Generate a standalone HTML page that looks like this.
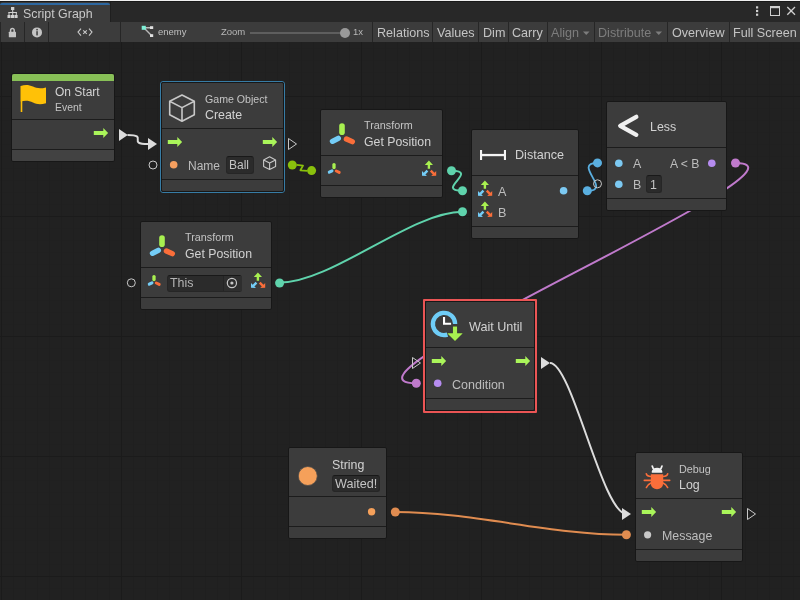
<!DOCTYPE html>
<html><head><meta charset="utf-8">
<style>
html,body{margin:0;padding:0;}
body{width:800px;height:600px;overflow:hidden;position:relative;background:#212121;font-family:"Liberation Sans",sans-serif;}
.a{position:absolute;}
.t{position:absolute;white-space:nowrap;line-height:1;will-change:transform;}
#grid{position:absolute;left:0;top:42px;width:800px;height:558px;background-color:#212121;
background-image:
linear-gradient(to right,#1b1b1b 1px,transparent 1px),
linear-gradient(to bottom,#1b1b1b 1px,transparent 1px),
linear-gradient(to right,#1f1f1f 1px,transparent 1px),
linear-gradient(to bottom,#202020 1px,transparent 1px);
background-size:120px 120px,120px 120px,12px 12px,12px 12px;
background-position:1px 54px,1px 54px,1px 6px,1px 6px;}
.n{position:absolute;box-sizing:border-box;border:1px solid #171717;border-radius:2px;background:#3c3c3c;}
.s{position:absolute;height:1px;background:#1c1c1c;}
.tb{position:absolute;top:22px;height:20px;width:1px;background:#262626;}
.bt{position:absolute;top:24px;font-size:12.6px;color:#c4c4c4;line-height:18px;white-space:nowrap;will-change:transform;}
.dis{color:#7d7d7d;}
svg{position:absolute;left:0;top:0;overflow:visible;}
</style></head>
<body>
<!-- top chrome -->
<div class="a" style="left:0;top:0;width:800px;height:1px;background:#f0f0f0"></div>
<div class="a" style="left:0;top:1px;width:800px;height:1px;background:#191919"></div>
<div class="a" style="left:0;top:2px;width:800px;height:20px;background:#282828"></div>
<div class="a" style="left:0;top:2px;width:110px;height:20px;background:#3c3c3c;border-radius:3px 3px 0 0"></div>
<div class="a" style="left:0;top:3px;width:110px;height:2px;background:#2d67a0;border-radius:2px 2px 0 0"></div>
<div class="a" style="left:110px;top:2px;width:1px;height:20px;background:#1f1f1f"></div>
<!-- toolbar -->
<div class="a" style="left:0;top:22px;width:800px;height:20px;background:#3c3c3c"></div>
<div class="tb" style="left:0"></div>
<div class="tb" style="left:24px"></div>
<div class="tb" style="left:48px"></div>
<div class="tb" style="left:120px"></div>
<div class="tb" style="left:372px"></div>
<div class="tb" style="left:432px"></div>
<div class="tb" style="left:478px"></div>
<div class="tb" style="left:508px"></div>
<div class="tb" style="left:547px"></div>
<div class="tb" style="left:594px"></div>
<div class="tb" style="left:667px"></div>
<div class="tb" style="left:729px"></div>
<div class="t" style="left:221px;top:27px;font-size:9.5px;color:#b8b8b8">Zoom</div>
<div class="t" style="left:158px;top:27px;font-size:9.5px;color:#c0c0c0">enemy</div>
<div class="t" style="left:353px;top:27px;font-size:9.5px;color:#b8b8b8">1x</div>
<div class="a" style="left:250px;top:32px;width:95px;height:2px;background:#5e5e5e"></div>
<div class="a" style="left:340px;top:28px;width:10px;height:10px;border-radius:50%;background:#999"></div>
<div class="bt" style="left:377px">Relations</div>
<div class="bt" style="left:437px">Values</div>
<div class="bt" style="left:483px">Dim</div>
<div class="bt" style="left:512px">Carry</div>
<div class="bt dis" style="left:551px">Align</div>
<div class="bt dis" style="left:598px">Distribute</div>
<div class="bt" style="left:672px">Overview</div>
<div class="bt" style="left:733px">Full Screen</div>
<!-- graph -->
<div id="grid"></div>

<!-- edges (under nodes) -->
<svg width="800" height="600" style="fill:none">
<path d="M127.5,135 C149.5,135 126,144 148,144" stroke="#dcdcdc" stroke-width="2"/>
<path d="M296.6,164.9 L303,165.6 L300.4,170.3 L307.4,170.9" stroke="#8ac10c" stroke-width="1.8" stroke-linejoin="round"/>
<path d="M451.5,170.8 C479.5,170.8 434.5,190.8 462.5,190.8" stroke="#5fd3ac" stroke-width="2"/>
<path d="M280.5,282.5 C331.5,282.5 411.5,211.8 462.5,211.8" stroke="#5fd3ac" stroke-width="2"/>
<path d="M587.3,190.8 C613.3,190.8 571.5,162.9 597.5,162.9" stroke="#5aafe0" stroke-width="1.8"/>
<path d="M735.5,163 C835.5,163 310.3,383.2 416.3,383.2" stroke="#c07acc" stroke-width="2"/>
<path d="M550,363 C572,363 602.5,514 626.5,514" stroke="#dcdcdc" stroke-width="2"/>
<path d="M395.5,512 C472.5,512 549.3,534.8 626.3,534.8" stroke="#e08c50" stroke-width="2"/>
<g fill="#dcdcdc">
<polygon points="119,129 127.8,135 119,141"/>
<polygon points="148,138 157,144 148,150"/>
<polygon points="541,357 550,363 541,369"/>
<polygon points="622,508 631,514 622,520"/>
</g>
<g fill="none" stroke="#c8c8c8" stroke-width="1">
<polygon points="288.5,138.5 296.5,144 288.5,149.5"/>
<polygon points="412.5,357.5 420.5,363 412.5,368.5"/>
<polygon points="747.5,508.5 755.5,514 747.5,519.5"/>
<circle cx="153" cy="165" r="4"/>
<circle cx="597.5" cy="183.8" r="4"/>
<circle cx="131.3" cy="282.8" r="4"/>
</g>
<g>
<circle cx="292.3" cy="165" r="4.5" fill="#8ac10c"/>
<circle cx="311.6" cy="170.6" r="4.5" fill="#8ac10c"/>
<circle cx="451.5" cy="170.8" r="4.5" fill="#5fd3ac"/>
<circle cx="462.5" cy="190.8" r="4.5" fill="#5fd3ac"/>
<circle cx="462.5" cy="211.8" r="4.5" fill="#5fd3ac"/>
<circle cx="279.6" cy="283" r="4.5" fill="#5fd3ac"/>
<circle cx="587.3" cy="190.8" r="4.5" fill="#5aafe0"/>
<circle cx="597.5" cy="162.9" r="4.5" fill="#5aafe0"/>
<circle cx="735.5" cy="163" r="4.5" fill="#c07acc"/>
<circle cx="416.3" cy="383.2" r="4.5" fill="#c07acc"/>
<circle cx="395.3" cy="512" r="4.5" fill="#e08c50"/>
<circle cx="626.4" cy="534.8" r="4.5" fill="#e08c50"/>
</g>
</svg>
<!-- nodes -->
<div class="n" style="left:11px;top:73px;width:104px;height:89px"></div>
<div class="a" style="left:12px;top:74px;width:102px;height:7px;background:#88c057;border-radius:2px 2px 0 0"></div>
<div class="s" style="left:12px;top:119px;width:102px"></div>
<div class="s" style="left:12px;top:149px;width:102px"></div>
<div class="a" style="left:12px;top:150px;width:102px;height:11px;background:#424242;border-radius:0 0 2px 2px"></div>

<div class="a" style="left:160px;top:81px;width:125px;height:112px;box-sizing:border-box;border:1px solid #377ca5;border-radius:3px"></div>
<div class="n" style="left:161px;top:82px;width:123px;height:110px"></div>
<div class="s" style="left:162px;top:128px;width:121px"></div>
<div class="s" style="left:162px;top:179px;width:121px"></div>

<div class="n" style="left:320px;top:109px;width:123px;height:89px"></div>
<div class="s" style="left:321px;top:155px;width:121px"></div>
<div class="s" style="left:321px;top:185px;width:121px"></div>

<div class="n" style="left:471px;top:129px;width:108px;height:110px"></div>
<div class="s" style="left:472px;top:175px;width:106px"></div>
<div class="s" style="left:472px;top:226px;width:106px"></div>

<div class="n" style="left:606px;top:101px;width:121px;height:110px"></div>
<div class="s" style="left:607px;top:147px;width:119px"></div>
<div class="s" style="left:607px;top:198px;width:119px"></div>

<div class="n" style="left:140px;top:221px;width:132px;height:89px"></div>
<div class="s" style="left:141px;top:267px;width:130px"></div>
<div class="s" style="left:141px;top:297px;width:130px"></div>

<div class="a" style="left:423px;top:299px;width:114px;height:114px;box-sizing:border-box;border:2px solid #eb5555;border-radius:1px"></div>
<div class="n" style="left:425px;top:301px;width:110px;height:110px"></div>
<div class="s" style="left:426px;top:347px;width:108px"></div>
<div class="s" style="left:426px;top:398px;width:108px"></div>

<div class="n" style="left:288px;top:447px;width:99px;height:92px"></div>
<div class="s" style="left:289px;top:496px;width:97px"></div>
<div class="s" style="left:289px;top:526px;width:97px"></div>

<div class="n" style="left:635px;top:452px;width:108px;height:110px"></div>
<div class="s" style="left:636px;top:498px;width:106px"></div>
<div class="s" style="left:636px;top:549px;width:106px"></div>

<!-- texts -->
<div class="t" style="left:55px;top:85.5px;font-size:12px;color:#d2d2d2">On Start</div>
<div class="t" style="left:55px;top:102.5px;font-size:10.4px;color:#c4c4c4">Event</div>
<div class="t" style="left:205px;top:93.5px;font-size:10.6px;color:#c4c4c4">Game Object</div>
<div class="t" style="left:205px;top:108.5px;font-size:12.4px;color:#d2d2d2">Create</div>
<div class="t" style="left:188px;top:159.5px;font-size:12px;color:#bdbdbd">Name</div>
<div class="a" style="left:226px;top:156px;width:28px;height:18px;background:#2b2b2b;border-radius:3px;box-sizing:border-box;border:1px solid #262626;border-top-color:#191919"></div>
<div class="t" style="left:229px;top:158.5px;font-size:12px;color:#c4c4c4">Ball</div>
<div class="t" style="left:364px;top:120px;font-size:10.8px;color:#c4c4c4">Transform</div>
<div class="t" style="left:364px;top:135.8px;font-size:12.3px;color:#d2d2d2">Get Position</div>
<div class="t" style="left:515px;top:149px;font-size:12.6px;color:#d2d2d2">Distance</div>
<div class="t" style="left:498px;top:185.8px;font-size:12.6px;color:#bdbdbd">A</div>
<div class="t" style="left:498px;top:206.8px;font-size:12.6px;color:#bdbdbd">B</div>
<div class="t" style="left:650px;top:120.5px;font-size:12.4px;color:#d2d2d2">Less</div>
<div class="t" style="left:633px;top:158px;font-size:12.4px;color:#bdbdbd">A</div>
<div class="t" style="left:669.5px;top:158px;font-size:12.2px;color:#bdbdbd">A &lt; B</div>
<div class="t" style="left:633px;top:178.8px;font-size:12.4px;color:#bdbdbd">B</div>
<div class="a" style="left:646px;top:175px;width:15.5px;height:17.5px;background:#2b2b2b;border-radius:3px;box-sizing:border-box;border:1px solid #262626;border-top-color:#191919"></div>
<div class="t" style="left:649.5px;top:179px;font-size:12.4px;color:#c4c4c4">1</div>
<div class="t" style="left:184.5px;top:232px;font-size:10.8px;color:#c4c4c4">Transform</div>
<div class="t" style="left:184.5px;top:247.8px;font-size:12.3px;color:#d2d2d2">Get Position</div>
<div class="a" style="left:167px;top:274.5px;width:75px;height:17px;background:#2b2b2b;border-radius:3px;box-sizing:border-box;border:1px solid #262626;border-top-color:#191919"></div>
<div class="a" style="left:223px;top:275.5px;width:18px;height:15px;background:#2e2e2e;border-left:1px solid #242424"></div>
<div class="t" style="left:170px;top:276.5px;font-size:12.4px;color:#b4b4b4">This</div>
<div class="t" style="left:469px;top:320.5px;font-size:12.6px;color:#d2d2d2">Wait Until</div>
<div class="t" style="left:452px;top:379px;font-size:12.5px;color:#bdbdbd">Condition</div>
<div class="t" style="left:332px;top:458.5px;font-size:12.4px;color:#d2d2d2">String</div>
<div class="a" style="left:332px;top:474.5px;width:48px;height:17px;background:#2b2b2b;border-radius:3px;box-sizing:border-box;border:1px solid #262626;border-top-color:#191919"></div>
<div class="t" style="left:334.5px;top:477.5px;font-size:12.6px;color:#c4c4c4">Waited!</div>
<div class="t" style="left:679px;top:463.5px;font-size:10.8px;color:#c4c4c4">Debug</div>
<div class="t" style="left:679px;top:478.5px;font-size:12.4px;color:#d2d2d2">Log</div>
<div class="t" style="left:662px;top:530px;font-size:12.4px;color:#bdbdbd">Message</div>
<div class="t" style="left:22.5px;top:7.5px;font-size:12.4px;color:#c8c8c8">Script Graph</div>
<!-- overlay icons -->
<svg width="800" height="600">
<defs>
<g id="arr"><path d="M0,-2H9.5V-5L14.3,0L9.5,5V2H0Z"/></g>
</defs>
<g fill="#aaf55a">
<use href="#arr" x="93.8" y="133"/>
<use href="#arr" x="167.8" y="142"/>
<use href="#arr" x="262.8" y="142"/>
<use href="#arr" x="431.8" y="361"/>
<use href="#arr" x="515.8" y="361"/>
<use href="#arr" x="641.8" y="512"/>
<use href="#arr" x="721.8" y="512"/>
</g>
<circle cx="173.7" cy="164.8" r="3.8" fill="#f59f5f"/>
<circle cx="563.6" cy="190.7" r="3.8" fill="#7cc9f2"/>
<circle cx="618.8" cy="163.2" r="3.8" fill="#7cc9f2"/>
<circle cx="618.8" cy="184.2" r="3.8" fill="#7cc9f2"/>
<circle cx="711.8" cy="163.2" r="3.8" fill="#b68cf0"/>
<circle cx="437.7" cy="383.2" r="3.8" fill="#b68cf0"/>
<circle cx="371.6" cy="511.7" r="3.7" fill="#f5a05a"/>
<circle cx="647.6" cy="534.8" r="3.6" fill="#c8c8c8"/>
</svg>

<!-- node icons -->
<svg width="800" height="600">
<defs>
<g id="v3">
<path d="M484.9,180.6 L489,184.9 L486.1,184.9 L486.1,188.8 L483.7,188.8 L483.7,184.9 L480.8,184.9 Z" fill="#a8f050"/>
<path d="M478,195.9 L478,191.2 L479.7,192.9 L482.6,190 L484.3,191.7 L481.4,194.6 L483,196.2 Z" fill="#74cdf7" transform="translate(0,-0.2)"/>
<path d="M492.2,195.9 L492.2,191.2 L490.5,192.9 L487.6,190 L485.9,191.7 L488.8,194.6 L487.2,196.2 Z" fill="#fa6e3a" transform="translate(0,-0.2)"/>
</g>
<g id="tri">
<line x1="342" y1="126" x2="342" y2="132.3" stroke="#a8f050" stroke-width="5.6" stroke-linecap="round"/>
<line x1="332.5" y1="141.3" x2="338.3" y2="138.3" stroke="#74cdf7" stroke-width="5.4" stroke-linecap="round"/>
<line x1="346.4" y1="139" x2="352.3" y2="141.6" stroke="#fa6e3a" stroke-width="5.4" stroke-linecap="round"/>
</g>
<g id="tris">
<line x1="334" y1="164.6" x2="334" y2="167.5" stroke="#a8f050" stroke-width="3.3" stroke-linecap="round"/>
<line x1="329.3" y1="172.2" x2="332" y2="170.8" stroke="#74cdf7" stroke-width="3" stroke-linecap="round"/>
<line x1="336.3" y1="171" x2="339.2" y2="172.4" stroke="#fa6e3a" stroke-width="3" stroke-linecap="round"/>
</g>
</defs>
<use href="#v3"/>
<use href="#v3" y="21"/>
<use href="#v3" x="-56" y="-20"/>
<use href="#v3" x="-227" y="92"/>
<use href="#tri"/>
<use href="#tri" x="-180" y="112"/>
<use href="#tris"/>
<use href="#tris" x="-180" y="112"/>
<!-- flag -->
<rect x="20.7" y="86" width="1.6" height="26" fill="#ffc107"/>
<path d="M20.7,86 C25,84.3 29,84.6 33,86.6 C36.5,88.3 40.5,89 46,87.4 L46,103.2 C40.5,104.8 36.5,104.3 33,102.5 C29,100.6 25,100.4 20.7,101.6 Z" fill="#ffc107"/>
<!-- cubes -->
<g fill="none" stroke="#c8c8c8" stroke-width="1.6" stroke-linejoin="round">
<path d="M182,95 L194.3,101.3 L194.3,114.8 L182,121.3 L169.7,114.8 L169.7,101.3 Z M169.7,101.3 L182,107.6 L194.3,101.3 M182,107.6 L182,121.3"/>
</g>
<g fill="none" stroke="#c8c8c8" stroke-width="1.1" stroke-linejoin="round">
<path d="M269.6,156.8 L275.6,159.9 L275.6,166.4 L269.6,169.5 L263.6,166.4 L263.6,159.9 Z M263.6,159.9 L269.6,163 L275.6,159.9 M269.6,163 L269.6,169.5"/>
</g>
<!-- distance -->
<g fill="#f5f5f5">
<rect x="480" y="150" width="2.1" height="10"/>
<rect x="503.9" y="150" width="2.1" height="10"/>
<rect x="482" y="153.9" width="22" height="2.3"/>
</g>
<!-- less -->
<path d="M636.3,116.8 L620.2,125.8 L636.3,134.8" fill="none" stroke="#f0f0f0" stroke-width="4.3" stroke-linecap="round" stroke-linejoin="round"/>
<!-- wait until -->
<path d="M455.15,324 A11.15,11.15 0 1 0 447.45,334.6" fill="none" stroke="#6fcdf7" stroke-width="4.3"/>
<path d="M443,317 h2.1 v5.7 h6 v2.1 h-8.1 Z" fill="#ffffff"/>
<path d="M452.9,326.6 h4.2 v6.6 h5.7 L455,341 L447.2,333.2 h5.7 Z" fill="#a8f050" stroke="#2e2e2e" stroke-width="0.8" paint-order="stroke"/>
<!-- string -->
<circle cx="307.8" cy="476" r="9.5" fill="#f5a05a" stroke="#4a4a4a" stroke-width="0.8"/>
<!-- bug -->
<g fill="#fa6e3a">
<path d="M650.8,474.3 h12.4 v9 a6.2,6 0 0 1 -12.4,0 Z"/>
</g>
<g fill="none" stroke="#fa6e3a" stroke-width="1.6" stroke-linecap="round">
<path d="M646.3,473.8 Q647,476.5 651,476.5"/>
<path d="M667.7,473.8 Q667,476.5 663,476.5"/>
<path d="M644.3,480.4 H651"/>
<path d="M669.7,480.4 H663"/>
<path d="M651,483 Q647.5,484.5 646.4,487.5"/>
<path d="M663,483 Q666.5,484.5 667.6,487.5"/>
</g>
<path d="M651.8,472.8 h10.5 v-1.2 a5.25,3.8 0 0 0 -10.5,0 Z" fill="#f0f0f0"/>
<g fill="none" stroke="#f0f0f0" stroke-width="1.7" stroke-linecap="round">
<path d="M652.2,466 Q652.8,469 655,470"/>
<path d="M662,466 Q661.4,469 659.2,470"/>
</g>
<!-- target icon in This field -->
<circle cx="231.9" cy="283" r="4.6" fill="none" stroke="#c8c8c8" stroke-width="1.2"/>
<circle cx="231.9" cy="283" r="1.6" fill="#c8c8c8"/>
<!-- toolbar icons -->
<g fill="#d0d0d0">
<rect x="11" y="7" width="3.3" height="3"/>
<rect x="12.2" y="9.5" width="1" height="3"/>
<rect x="8.5" y="12" width="8.3" height="1"/>
<rect x="8.5" y="12" width="1" height="3"/>
<rect x="12.2" y="12" width="1" height="3"/>
<rect x="15.8" y="12" width="1" height="3"/>
<rect x="7.5" y="15" width="3" height="3"/>
<rect x="11" y="15" width="3.3" height="3"/>
<rect x="14.6" y="15" width="3" height="3"/>
</g>
<g fill="#c4c4c4">
<rect x="8.8" y="31.8" width="7.2" height="5.4" rx="0.5"/>
</g>
<path d="M10.6,32 V30.2 A1.8,1.8 0 0 1 14.2,30.2 V32" fill="none" stroke="#c4c4c4" stroke-width="1.5"/>
<circle cx="37" cy="32.4" r="5" fill="#c4c4c4"/>
<rect x="36.3" y="28.9" width="1.5" height="1.5" fill="#3c3c3c"/>
<rect x="36.3" y="31.2" width="1.5" height="4.2" fill="#3c3c3c"/>
<g fill="none" stroke="#c8c8c8" stroke-width="1.1">
<path d="M81,28.6 L78,32.1 L81,35.6"/>
<path d="M89,28.6 L92,32.1 L89,35.6"/>
<path d="M83.2,30.3 L86.8,33.9 M86.8,30.3 L83.2,33.9"/>
</g>
<g stroke="#b8b8b8" stroke-width="1.4" fill="none">
<path d="M143.8,27.8 H151.5 M143.8,27.8 L151.5,35.5"/>
</g>
<rect x="141.7" y="25.8" width="4.1" height="4" fill="#7ff0d8"/>
<rect x="150" y="26.2" width="3.2" height="2.8" fill="#e0e0e0"/>
<rect x="150" y="34.2" width="3.2" height="2.8" fill="#e0e0e0"/>
<g fill="#7d7d7d">
<polygon points="583,31.5 589.5,31.5 586.25,35"/>
<polygon points="655.5,31.5 662,31.5 658.75,35"/>
</g>
<g fill="#d0d0d0">
<rect x="756" y="6.3" width="2.2" height="2.2"/>
<rect x="756" y="9.9" width="2.2" height="2.2"/>
<rect x="756" y="13.6" width="2.2" height="2.2"/>
</g>
<rect x="770.5" y="6.5" width="9" height="9" fill="none" stroke="#d0d0d0" stroke-width="1"/>
<rect x="770" y="6" width="10" height="2.2" fill="#d0d0d0"/>
<path d="M787.3,7 L795,14.7 M795,7 L787.3,14.7" stroke="#d0d0d0" stroke-width="1.3"/>
</svg>
</body></html>
